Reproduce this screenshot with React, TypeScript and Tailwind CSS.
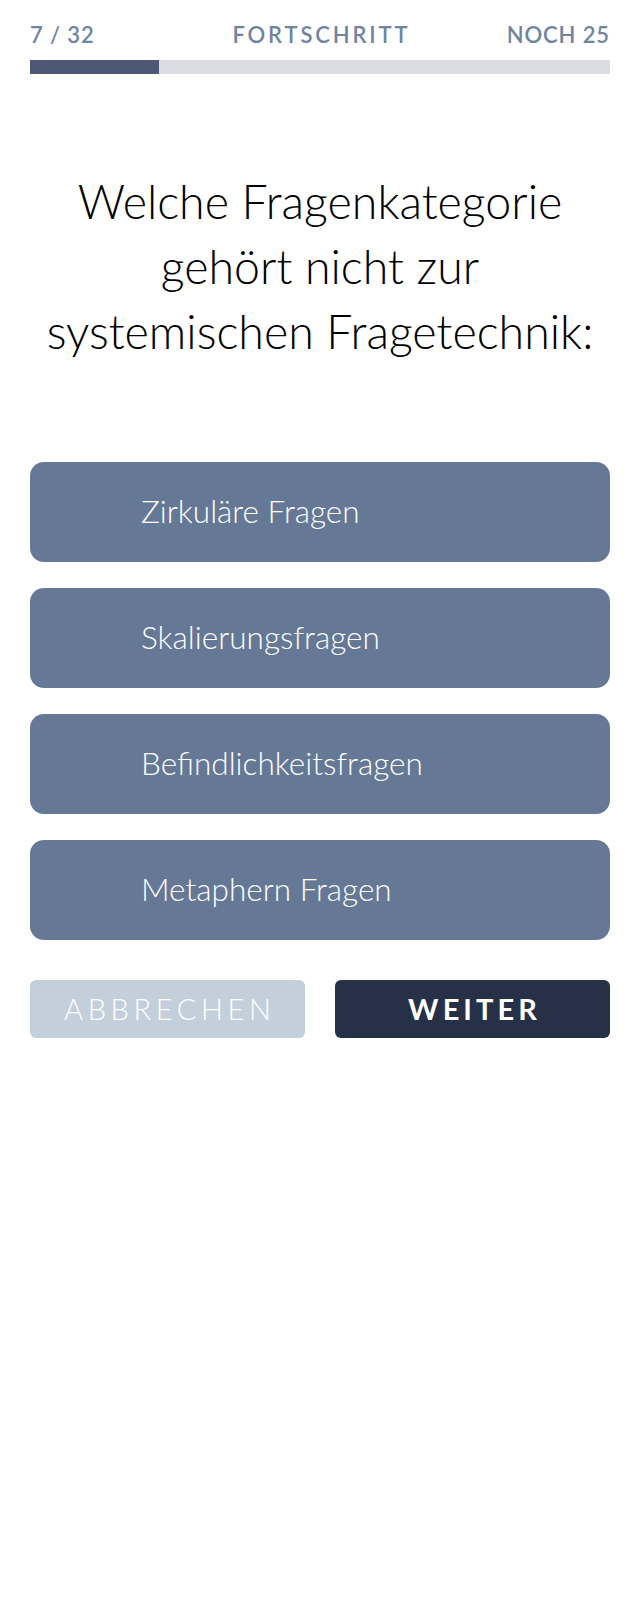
import React from "react";

const options = [
  "Zirkuläre Fragen",
  "Skalierungsfragen",
  "Befindlichkeitsfragen",
  "Metaphern Fragen",
];

export default function App() {
  const progress = 22.3;
  return (
    <div
      className="w-[640px] min-h-[1600px] bg-white px-[30px]"
      style={{ fontFamily: "Lato, 'Open Sans', sans-serif" }}
    >
      <div className="pt-[21px] grid grid-cols-[1fr_auto_1fr] items-center text-[22px] font-semibold text-[#6f84a0] leading-[28px]">
        <span className="tracking-[0.04em] justify-self-start">7 / 32</span>
        <span className="tracking-[0.13em] pl-[0.13em]">FORTSCHRITT</span>
        <span className="tracking-[0.04em] justify-self-end">NOCH 25</span>
      </div>
      <div className="mt-[11px] h-[14px] bg-[#dcdde2]">
        <div className="h-full bg-[#4c5874]" style={{ width: `${progress}%` }} />
      </div>

      <h1 className="mt-[95px] text-center text-[46.5px] font-light leading-[65px] text-black">
        Welche Fragenkategorie
        <br />
        gehört nicht zur
        <br />
        systemischen Fragetechnik:
      </h1>

      <div className="mt-[98px] flex flex-col gap-[26px]">
        {options.map((o) => (
          <div
            key={o}
            className="h-[100px] rounded-[14px] bg-[#657896] flex items-center pl-[111px] text-[31.5px] font-light text-white"
          >
            {o}
          </div>
        ))}
      </div>

      <div className="mt-[40px] flex justify-between">
        <button className="w-[275px] h-[58px] rounded-[6px] bg-[#c3cfdb] text-white text-[29px] font-light tracking-[0.16em] pl-[0.16em]">
          ABBRECHEN
        </button>
        <button className="w-[275px] h-[58px] rounded-[6px] bg-[#263147] text-white text-[29px] font-bold tracking-[0.14em] pl-[0.14em]">
          WEITER
        </button>
      </div>
    </div>
  );
}
